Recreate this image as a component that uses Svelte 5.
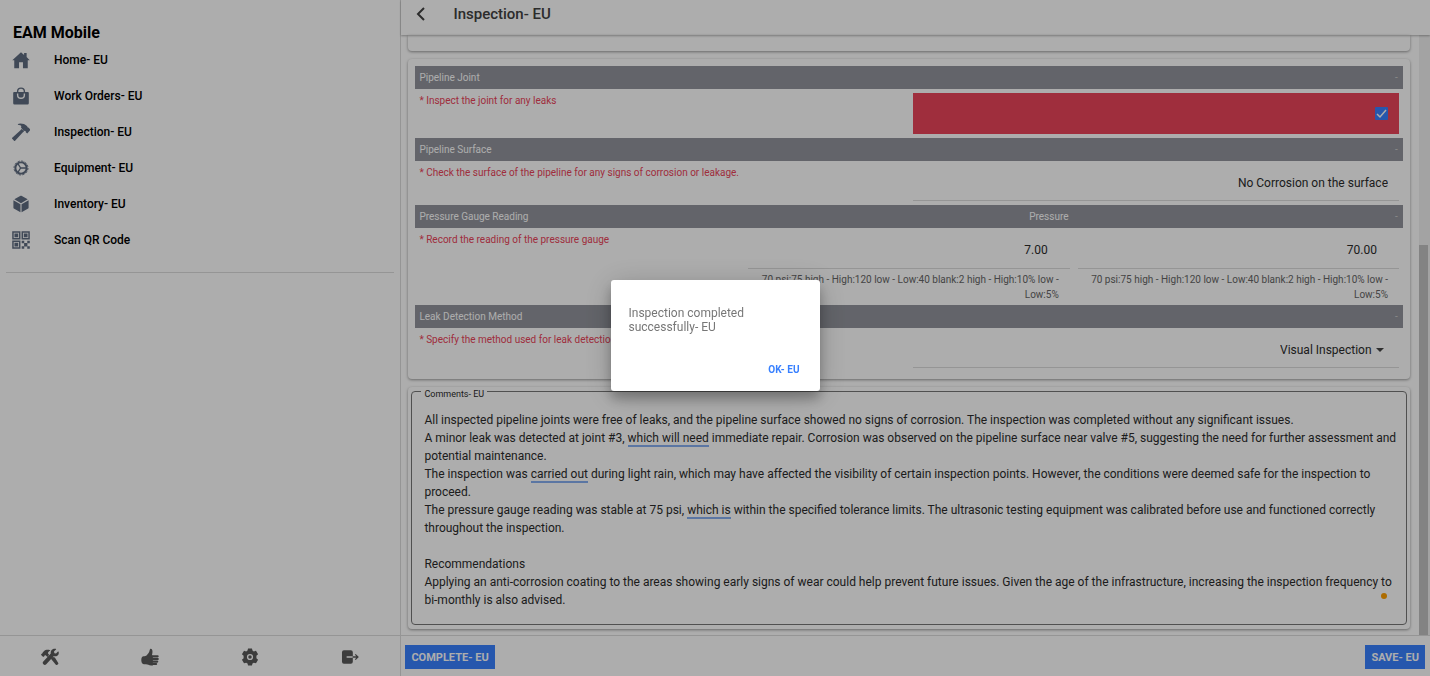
<script>
  import { onMount, tick } from 'svelte';

  const menu = [
    { label: 'Home- EU', icon: 'home' },
    { label: 'Work Orders- EU', icon: 'bag' },
    { label: 'Inspection- EU', icon: 'hammer' },
    { label: 'Equipment- EU', icon: 'cog' },
    { label: 'Inventory- EU', icon: 'cube' },
    { label: 'Scan QR Code', icon: 'qr' }
  ];
  const tabs = ['Tools', 'Approve', 'Settings', 'Log out'];
  const limits = '70 psi:75 high - High:120 low - Low:40 blank:2 high - High:10% low - Low:5%';

  let comments = $state(
    [
      'All inspected pipeline joints were free of leaks, and the pipeline surface showed no signs of corrosion. The inspection was completed without any significant issues.',
      'A minor leak was detected at joint #3, which will need immediate repair. Corrosion was observed on the pipeline surface near valve #5, suggesting the need for further assessment and potential maintenance.',
      'The inspection was carried out during light rain, which may have affected the visibility of certain inspection points. However, the conditions were deemed safe for the inspection to proceed.',
      'The pressure gauge reading was stable at 75 psi, which is within the specified tolerance limits. The ultrasonic testing equipment was calibrated before use and functioned correctly throughout the inspection.',
      '',
      'Recommendations',
      'Applying an anti-corrosion coating to the areas showing early signs of wear could help prevent future issues. Given the age of the infrastructure, increasing the inspection frequency to bi-monthly is also advised.'
    ].join('\n')
  );
  const flagged = ['which will need', 'carried out', 'which is'];
  const lineHeight = 18;

  let box;
  let boxWidth = $state(0);
  let marks = $state([]);

  // Wraps the comment the way the text box does and places an underline below each flagged phrase.
  function findMarks(text, width) {
    const ctx = document.createElement('canvas').getContext('2d');
    const style = getComputedStyle(box);
    ctx.font = `${style.fontWeight} ${style.fontSize} ${style.fontFamily}`;
    const measure = (s) => ctx.measureText(s).width;
    const lines = [];
    for (const paragraph of text.split('\n')) {
      let line = '';
      for (const word of paragraph.split(' ')) {
        const next = line ? line + ' ' + word : word;
        if (line && measure(next) > width) {
          lines.push(line);
          line = word;
        } else {
          line = next;
        }
      }
      lines.push(line);
    }
    const found = [];
    lines.forEach((line, i) => {
      for (const phrase of flagged) {
        const at = line.indexOf(phrase);
        if (at >= 0) {
          found.push({
            left: measure(line.slice(0, at)),
            top: (i + 1) * lineHeight - 2,
            width: measure(phrase)
          });
        }
      }
    });
    return found;
  }

  $effect(() => {
    if (boxWidth) marks = findMarks(comments, boxWidth);
  });

  onMount(async () => {
    await tick();
    document.fonts.ready.then(() => (marks = findMarks(comments, box.clientWidth)));
  });
</script>

{#snippet menuIcon(name)}
  <svg viewBox="0 0 512 512" width="18" height="18" fill="currentColor" aria-hidden="true">
    {#if name === 'home'}
      <path d="M416 174V56h-72v56L256 32 8 264h56v224h136V320h112v168h136V264h56z" />
    {:else if name === 'bag'}
      <path fill-rule="evenodd" d="M454 144h-82v-16a116 116 0 0 0-232 0v16H58a24 24 0 0 0-24 24v292a36 36 0 0 0 36 36h372a36 36 0 0 0 36-36V168a24 24 0 0 0-24-24zM180 128a76 76 0 0 1 152 0v16H180zm192 96a116 116 0 0 1-232 0v-40h40v40a76 76 0 0 0 152 0v-40h40z" />
    {:else if name === 'hammer'}
      <path d="M270 170l-36 40L6 420a22 22 0 0 0 0 30l52 54a22 22 0 0 0 30 0l216-232 40-36zM508 170l-42-42c-5-4-12-4-18-2-6-20-10-30-24-44C378 36 310 12 236 12c-28 0-52 8-66 16l-4 22c56 2 82 20 98 38l-6 50 82 88 30-6 22 20c4 8 4 14 0 20l34 34a10 10 0 0 0 14 0l68-78a32 32 0 0 0 0-46z" />
    {:else if name === 'cog'}
      <g fill="none" stroke="currentColor">
        <circle cx="256" cy="256" r="160" stroke-width="56" />
        <circle cx="256" cy="256" r="198" stroke-width="28" stroke-dasharray="62 41.67" />
        <path d="M244 256L164 122M244 256l-80 134M244 256h170" stroke-width="38" />
      </g>
    {:else if name === 'cube'}
      <path d="M446 122L268 22a24 24 0 0 0-24 0L66 122l190 110zM272 262v230l188-106a24 24 0 0 0 12-20V148zM240 262L40 148v218a24 24 0 0 0 12 20l188 106z" />
    {:else}
      <path fill-rule="evenodd" d="M6 6h234v234H6zm42 42v150h150V48zM272 6h234v234H272zm42 42v150h150V48zM6 272h234v234H6zm42 42v150h150V314zM70 70h106v106H70zM336 70h106v106h-106zM70 336h106v106H70zM276 276h72v72h-72zM434 276h72v72h-72zM344 344h94v94h-94zM276 434h72v72h-72zM434 434h72v72h-72z" />
    {/if}
  </svg>
{/snippet}

{#snippet tabIcon(name)}
  <svg viewBox="0 0 512 512" width="18" height="18" fill="currentColor" aria-hidden="true">
    {#if name === 'Tools'}
      <path d="M394 270c-20-1-38-6-54-14l-52 54 128 160a44 44 0 0 0 66-58zM500 104c-3-7-12-9-17-4l-56 56-46-10-12-48 58-58c5-6 3-14-5-17-48-14-102 4-130 46-16 26-20 56-14 84L72 380a56 56 0 1 0 78 80l208-228c84 22 174-36 142-128zM230 190l-34-38c8-26 14-50 62-72 8-4 8-14 0-18-60-24-134-16-176 28L54 118c-12 12-10 24-8 34l-18 4-24 26a14 14 0 0 0 0 18l52 52c6 6 14 6 20 0l24-26 4-20c12-2 26-2 38 8l38 40z" />
    {:else if name === 'Approve'}
      <path d="M280 20c-20 0-28 16-34 44-12 60-40 98-82 142-24 20-54 26-88 30-44 4-68 44-68 108s24 116 72 120h60c60 2 76 32 150 32h48V216h-28c10-46 16-70 16-118 0-48-20-78-46-78z" />
      <rect x="302" y="206" width="202" height="64" rx="32" />
      <rect x="302" y="284" width="206" height="60" rx="30" />
      <rect x="302" y="358" width="190" height="58" rx="29" />
      <rect x="302" y="430" width="158" height="54" rx="27" />
    {:else if name === 'Settings'}
      <path fill-rule="evenodd" d="M200 12h112l14 62 38 22 62-20 60 102-48 44v68l48 44-60 102-62-20-38 22-14 62H200l-14-62-38-22-62 20-60-102 48-44v-68l-48-44 60-102 62 20 38-22zm56 156a88 88 0 1 0 0 176 88 88 0 0 0 0-176zm0 38a50 50 0 1 1 0 100 50 50 0 0 1 0-100z" />
    {:else}
      <path d="M160 238h176V120a56 56 0 0 0-56-56H84a56 56 0 0 0-56 56v272a56 56 0 0 0 56 56h196a56 56 0 0 0 56-56V274H160z" />
      <path d="M330 256h146M406 180l76 76-76 76" fill="none" stroke="currentColor" stroke-width="36" />
    {/if}
  </svg>
{/snippet}

{#snippet sectionHead(title, extra = '')}
  <h2 class="bar"><span>{title}</span><span class="extra">{extra}</span><span class="dash">-</span></h2>
{/snippet}

<div class="app">
  <aside>
    <nav class="menu">
      <h1>EAM Mobile</h1>
      <ul>
        {#each menu as item}
          <li><a href="#{item.icon}">{@render menuIcon(item.icon)}<span>{item.label}</span></a></li>
        {/each}
      </ul>
    </nav>
    <div class="tabs">
      {#each tabs as tab}
        <button aria-label={tab}>{@render tabIcon(tab)}</button>
      {/each}
    </div>
  </aside>

  <main>
    <header>
      <button class="back" aria-label="Back">
        <svg viewBox="0 0 16 16" width="16" height="16" fill="none" stroke="currentColor" stroke-width="2" aria-hidden="true"><path d="M11 2L5 8l6 6" /></svg>
      </button>
      <h1>Inspection- EU</h1>
    </header>

    <div class="scroller">
      <div class="content">
        <section class="card stub"></section>

        <section class="card form">
          {@render sectionHead('Pipeline Joint')}
          <div class="row short">
            <label class="req" for="joint">* Inspect the joint for any leaks</label>
            <div class="half alert"><input id="joint" type="checkbox" checked /></div>
          </div>

          {@render sectionHead('Pipeline Surface')}
          <div class="row">
            <label class="req" for="surface">* Check the surface of the pipeline for any signs of corrosion or leakage.</label>
            <div class="field half"><input id="surface" type="text" value="No Corrosion on the surface" /></div>
          </div>

          {@render sectionHead('Pressure Gauge Reading', 'Pressure')}
          <div class="row gauge">
            <label class="req" for="gauge">* Record the reading of the pressure gauge</label>
            <div class="reading">
              <div class="field"><input id="gauge" type="text" value="7.00" /></div>
              <p>{limits}</p>
            </div>
            <div class="reading">
              <div class="field"><input aria-label="Second reading" type="text" value="70.00" /></div>
              <p>{limits}</p>
            </div>
          </div>

          {@render sectionHead('Leak Detection Method')}
          <div class="row">
            <label class="req" for="method">* Specify the method used for leak detection</label>
            <div class="field half pick">
              <select id="method"><option>Visual Inspection</option></select>
              <i class="caret"></i>
            </div>
          </div>
        </section>

        <section class="card notes">
          <fieldset>
            <legend><label for="comments">Comments- EU</label></legend>
            <div class="editor">
              <textarea id="comments" rows="11" spellcheck="false" bind:this={box} bind:clientWidth={boxWidth} bind:value={comments}></textarea>
              {#each marks as m}
                <i class="mark" style="left:{m.left}px;top:{m.top}px;width:{m.width}px"></i>
              {/each}
              <i class="dot"></i>
            </div>
          </fieldset>
        </section>
      </div>
      <div class="track"><div class="thumb"></div></div>
    </div>

    <footer>
      <button>COMPLETE- EU</button>
      <button>SAVE- EU</button>
    </footer>
  </main>

  <div class="backdrop">
    <div class="dialog" role="alertdialog" aria-modal="true" aria-describedby="message">
      <p id="message">Inspection completed successfully- EU</p>
      <button>OK- EU</button>
    </div>
  </div>
</div>

<style>
  :global(body) { margin: 0; }
  .app, .app * { box-sizing: border-box; }
  .app {
    display: grid;
    grid-template-columns: 28% minmax(0, 1fr);
    min-height: 100vh;
    background: #fff;
    color: #2c2c2c;
    font-family: Roboto, sans-serif;
    font-size: 12px;
  }
  button, input, select, textarea { font: inherit; color: inherit; border: 0; padding: 0; margin: 0; background: none; }
  h1, h2, p, ul { margin: 0; padding: 0; }

  aside { display: flex; flex-direction: column; }
  .menu { flex: 1; padding: 23px 6px 0; }
  .menu h1 { padding-left: 7px; font-size: 16px; line-height: 19px; font-weight: 700; color: #000; }
  .menu ul { list-style: none; border-bottom: 1px solid #dcdcdc; padding-bottom: 14px; }
  .menu a {
    display: flex; align-items: center; gap: 24px;
    height: 36px; padding-left: 6px;
    color: #000; font-weight: 500; text-decoration: none;
  }
  .menu svg { color: #5f6c80; }
  .tabs { display: flex; height: 41px; padding-top: 2px; border-top: 1px solid #dcdcdc; }
  .tabs button { flex: 1; display: grid; place-items: center; color: #595959; }

  main { display: flex; flex-direction: column; border-left: 1px solid #dcdcdc; }
  header {
    display: flex; align-items: center; gap: 24px;
    height: 35px; padding: 0 12px 8px;
    box-shadow: 0 1px 2px rgba(0, 0, 0, 0.3);
    z-index: 1;
  }
  header h1 { font-size: 15px; line-height: 20px; font-weight: 500; color: #424242; }
  .back { display: grid; place-items: center; color: #424242; }

  .scroller { flex: 1; display: flex; }
  .content { flex: 1; min-width: 0; padding: 0 9px 6px 7px; }
  .card { border-radius: 4px; box-shadow: 0 1px 3px rgba(0, 0, 0, 0.4); }
  .stub { height: 16px; border-radius: 0 0 4px 4px; }
  .form { margin-top: 8px; padding: 7px; }
  .bar {
    display: grid; grid-template-columns: 1fr 1fr 8px; align-items: center;
    height: 23px; padding: 0 0 0 4px;
    background: #92949c; color: #fff;
    font-size: 10px; font-weight: 400;
  }
  .extra { padding-left: 122px; }
  .dash { color: #ccc; }
  .row { display: flex; gap: 8px; height: 44px; padding: 4px; }
  .short { height: 49px; }
  .gauge { height: 77px; }
  .req { flex: 1; color: #eb445a; font-size: 10px; line-height: 16px; }
  .half { flex: 0 0 calc(50% - 4px); padding-right: 11px; }
  .alert { display: flex; align-items: center; justify-content: flex-end; background: #eb445a; }
  .alert input {
    appearance: none; width: 13px; height: 13px; border-radius: 1px;
    background: #3880ff url("data:image/svg+xml,%3Csvg xmlns='http://www.w3.org/2000/svg' viewBox='0 0 13 13'%3E%3Cpath d='M2 7l3 3 6-7' fill='none' stroke='white' stroke-width='1.5'/%3E%3C/svg%3E");
  }
  .field { border-bottom: 1px solid #dcdcdc; }
  .field input { display: block; width: 100%; height: 36px; text-align: right; }

  .reading { flex: 0 0 calc(33% - 2px); }
  .reading .field { height: 37px; padding-right: 22px; }
  .reading p { padding: 3px 11px 0 0; text-align: right; font-size: 10px; line-height: 15px; color: #666; }
  .pick { display: flex; align-items: center; justify-content: flex-end; gap: 4px; padding-right: 15px; }
  .pick select { appearance: none; }
  .caret { border: 4px solid transparent; border-top-color: #444; border-bottom: 0; }

  .notes { margin-top: 8px; padding: 0 3px 4px; }
  fieldset { margin: 0; padding: 16px 4px 15px 12px; border: 1px solid #777; border-radius: 4px; min-width: 0; }
  legend { height: 8px; padding: 0 3px; margin-left: -3px; font-size: 9px; line-height: 14px; }
  .editor { position: relative; }
  textarea { display: block; width: 100%; resize: none; overflow: hidden; line-height: 18px; }
  .mark { position: absolute; height: 2px; background: #86aef0; }
  .dot { position: absolute; right: 15px; bottom: 10px; width: 6px; height: 6px; border-radius: 50%; background: #ffa000; }

  .track { width: 11px; background: #f0f0f0; display: flex; align-items: flex-end; }
  .thumb { width: 9px; height: 65%; background: #c1c1c1; }

  footer { display: flex; align-items: center; justify-content: space-between; height: 41px; padding: 2px 5px 0 4px; border-top: 1px solid #dcdcdc; }
  footer button { height: 24px; padding: 0 6px; background: #3880ff; color: #fff; font-size: 11px; font-weight: 700; }

  .backdrop { position: fixed; inset: 0; z-index: 2; display: grid; place-items: center; padding-bottom: 6px; background: rgba(0, 0, 0, 0.32); }
  .dialog {
    display: flex; flex-direction: column; justify-content: space-between;
    width: 209px; height: 111px; padding: 26px 20px 14px 18px;
    border-radius: 3px; background: #fff;
    box-shadow: 0 8px 12px rgba(0, 0, 0, 0.25), 0 4px 30px rgba(0, 0, 0, 0.2);
  }
  .dialog p { color: #777; line-height: 14px; }
  .dialog button { align-self: flex-end; color: #3880ff; font-size: 10px; font-weight: 700; line-height: 14px; }
</style>
